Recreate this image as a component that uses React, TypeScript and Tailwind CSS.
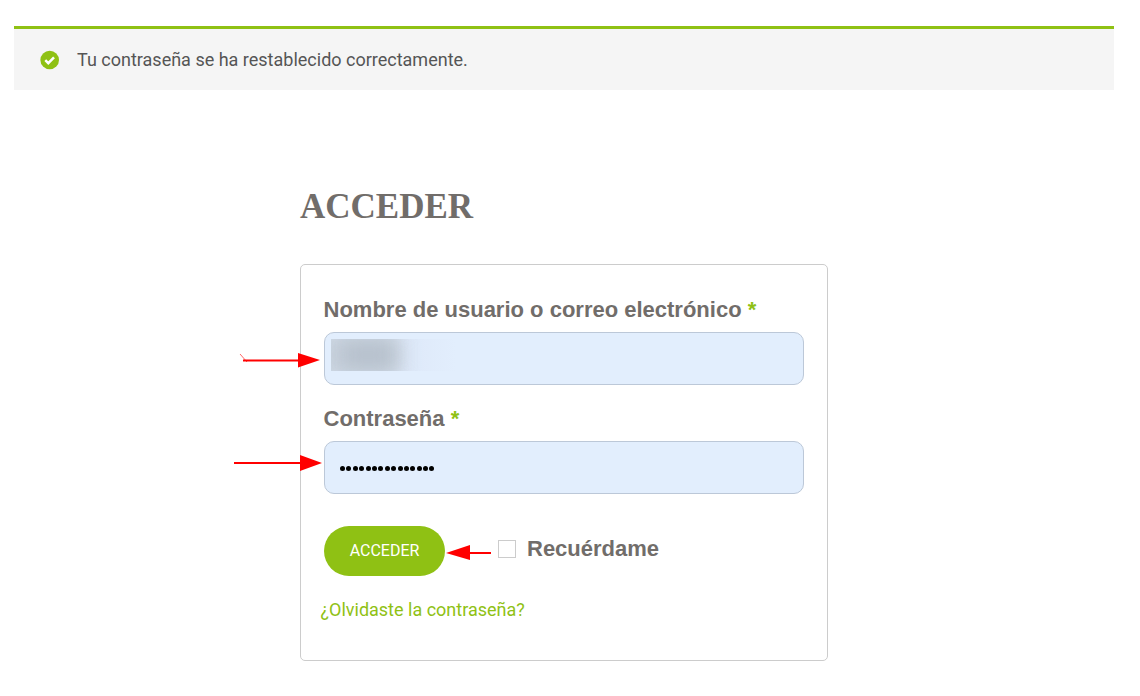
export default function App() {
  return (
    <div className="relative h-[696px] w-[1140px] overflow-hidden bg-white font-['Roboto',sans-serif]">
      <div className="mx-[14px] mt-[26px] flex h-[64px] w-[1100px] items-center border-t-[3px] border-[#8fc114] bg-[#f5f5f5] pl-[26px]">
        <svg width="20" height="20" viewBox="0 0 20 20" className="shrink-0">
          <circle cx="9.700" cy="10" r="9.300" fill="#8fc114" />
          <path d="M5.300 10.200l3 3 5.700-5.900" fill="none" stroke="#fff" strokeWidth="2.500" />
        </svg>
        <span className="ml-[17px] text-[18px] leading-none text-[#555555]">Tu contraseña se ha restablecido correctamente.</span>
      </div>

      <div className="ml-[300px] w-[528px]">
        <h2 className="mt-[96px] font-['Liberation_Serif',serif] text-[35px] leading-[42px] font-bold text-[#716d6a]">ACCEDER</h2>
        <div className="mt-[36px] h-[397px] rounded-[5px] border border-[#cccccc] px-[23px] pt-[31px]">
          <label className="-ml-[0.5px] block font-['Liberation_Sans',sans-serif] text-[22px] leading-[28px] font-bold text-[#716d6a]">
            Nombre de usuario o correo electrónico <span className="text-[#8fc114]">*</span>
          </label>
          <div className="relative mt-[8px] h-[53px] w-[480px] overflow-hidden rounded-[10px] border border-[#bcc8d8] bg-[#e2eefd]">
            <div className="absolute top-[6px] left-[6px] h-[32px] w-[125px] overflow-hidden bg-[linear-gradient(90deg,#dfeafa_0%,#dfeafa_70%,#e2eefd_100%)]">
              <div className="absolute top-[8px] left-[12px] h-[16px] w-[48px] bg-[#a9b3bf] blur-[12px]" />
              <div className="absolute top-[-8px] left-[-10px] h-[48px] w-[80px] bg-[#c4ced9] blur-[10px]" />
              <div className="absolute top-[6px] left-[14px] h-[20px] w-[46px] bg-[#b6c0cc] blur-[8px]" />
            </div>
          </div>
          <label className="mt-[20px] -ml-[0.5px] block font-['Liberation_Sans',sans-serif] text-[22px] leading-[28px] font-bold text-[#716d6a]">
            Contraseña <span className="text-[#8fc114]">*</span>
          </label>
          <div className="mt-[8px] flex h-[53px] w-[480px] items-center rounded-[10px] border border-[#bcc8d8] bg-[#e2eefd] pl-[15px]">
            <div className="mt-[1px] flex gap-[1.400px]">
              {Array.from({ length: 15 }).map((_, i) => (
                <span key={i} className="h-[5px] w-[5px] rounded-full bg-black" />
              ))}
            </div>
          </div>
          <div className="mt-[32px] flex items-center">
            <button className="h-[50px] w-[121px] rounded-[25px] bg-[#8fc114] text-[16px] text-white">ACCEDER</button>
            <span className="mb-[5px] ml-[53px] h-[18px] w-[18px] border border-[#cccccc] bg-white" />
            <span className="mb-[5px] ml-[11px] font-['Liberation_Sans',sans-serif] text-[22px] leading-[28px] font-bold text-[#716d6a]">Recuérdame</span>
          </div>
          <a className="mt-[22px] -ml-[3.500px] block text-[18px] leading-[24px] text-[#8fc114]">¿Olvidaste la contraseña?</a>
        </div>
      </div>

      <svg className="pointer-events-none absolute top-0 left-0" width="1140" height="696" viewBox="0 0 1140 696">
        <path d="M243 360.500H300" stroke="#ff0000" strokeWidth="2" />
        <path d="M240 354l7 8" stroke="#ff0000" strokeWidth="1" opacity="0.6" />
        <path d="M298 353l22 7-22 7.500z" fill="#ff0000" />
        <path d="M234 463H302" stroke="#ff0000" strokeWidth="2" />
        <path d="M300 455l22 8-22 8z" fill="#ff0000" />
        <path d="M468 553H491" stroke="#ff0000" strokeWidth="2" />
        <path d="M470 545l-24 8 24 7z" fill="#ff0000" />
      </svg>
    </div>
  );
}
